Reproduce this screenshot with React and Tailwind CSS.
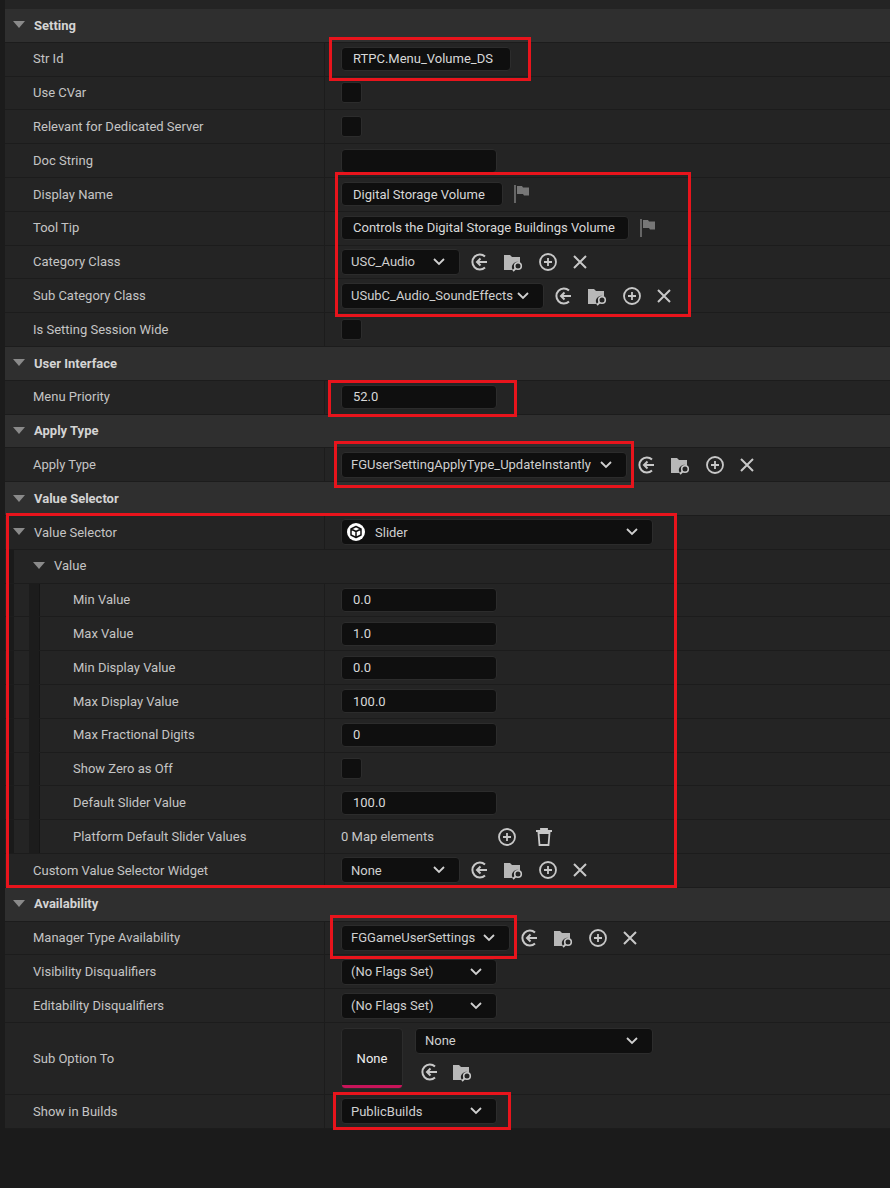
import React from "react";

const H = "h-[33.8px]";
const Tri = () => (
  <svg width="12" height="8" viewBox="0 0 12 8" className="shrink-0"><path d="M0 0h12L6 7z" fill="#8a8a8a" /></svg>
);
const Chev = () => (
  <svg width="12" height="8" viewBox="0 0 12 8" className="shrink-0"><path d="M1 1l5 5 5-5" stroke="#d0d0d0" strokeWidth="1.8" fill="none" /></svg>
);
const UseIcon = () => (
  <svg width="20" height="20" viewBox="0 0 20 20"><path d="M15 4.5A7.5 7.5 0 1 0 15 15.5" stroke="#c8c8c8" strokeWidth="2" fill="none" /><path d="M17 10H7M10.5 6.5L7 10l3.5 3.5" stroke="#c8c8c8" strokeWidth="2" fill="none" /></svg>
);
const Browse = () => (
  <svg width="22" height="20" viewBox="0 0 22 20"><path d="M1 3h6l2 2h8v6a5 5 0 0 0-7 7H1z" fill="#b8b8b8" /><circle cx="15" cy="14" r="3.3" stroke="#c8c8c8" strokeWidth="1.6" fill="none" /><path d="M12.5 16.5L10 19" stroke="#c8c8c8" strokeWidth="1.8" /></svg>
);
const Plus = () => (
  <svg width="20" height="20" viewBox="0 0 20 20"><circle cx="10" cy="10" r="8" stroke="#c8c8c8" strokeWidth="1.8" fill="none" /><path d="M10 6v8M6 10h8" stroke="#c8c8c8" strokeWidth="1.8" /></svg>
);
const X = () => (
  <svg width="18" height="18" viewBox="0 0 18 18"><path d="M3 3l12 12M15 3L3 15" stroke="#c8c8c8" strokeWidth="2" /></svg>
);
const Trash = () => (
  <svg width="18" height="20" viewBox="0 0 18 20"><path d="M1 4h16M6 4V2h6v2M3.5 6h11l-1 12h-9z" stroke="#c8c8c8" strokeWidth="1.8" fill="none" /></svg>
);
const Flag = () => (
  <svg width="18" height="20" viewBox="0 0 18 20"><path d="M2 1v18" stroke="#777" strokeWidth="1.6" /><path d="M4 2h5l1 1.5h6v8h-5l-1-1.5H4z" fill="#777" /></svg>
);
const Tools = () => (
  <div className="flex items-center gap-[13px] shrink-0"><UseIcon /><Browse /><Plus /><X /></div>
);

const Box = ({ w, children, cls = "" }) => (
  <div className={`h-[24px] rounded-[4px] bg-[#0f0f0f] border border-[#2c2c2c] flex items-center px-[11px] text-[#d8d8d8] shrink-0 ${cls}`} style={{ width: w }}>{children}</div>
);
const Combo = ({ w, text }) => (
  <div className="h-[26px] rounded-[4px] bg-[#0f0f0f] border border-[#2c2c2c] flex items-center justify-between pl-[9px] pr-[14px] text-[#d0d0d0] shrink-0" style={{ width: w }}>
    <span>{text}</span><Chev />
  </div>
);
const Check = () => <div className="w-[21px] h-[21px] rounded-[3px] bg-[#0f0f0f] border border-[#2c2c2c]" />;

const Header = ({ t }) => (
  <div className={`${H} bg-[#2f2f2f] border-b border-[#1c1c1c] flex items-center pl-[8px] gap-[9px] font-bold text-[#d4d4d4]`}>
    <Tri /><span>{t}</span>
  </div>
);

const Row = ({ label, children, depth = 0, tri, full, h = H }) => {
  const pad = depth === 0 ? (tri ? "pl-[8px]" : "pl-[28px]") : depth === 1 ? "pl-[28px]" : "pl-[68px]";
  return (
    <div className={`${h} flex border-b border-[#1c1c1c] bg-[#242424] relative`}>
      {depth >= 1 && <div className="absolute left-[3px] top-0 bottom-0 w-[6px] bg-[#1a1a1a]" />}
      {depth >= 2 && <div className="absolute left-[24px] top-0 bottom-0 w-[10px] bg-[#1c1c1c]" />}
      {depth >= 2 && <div className="absolute left-[34px] top-0 bottom-0 w-[1px] bg-[#151515]" />}
      <div className={`w-[320px] shrink-0 flex items-center gap-[9px] ${full ? "flex-1" : "border-r border-[#1c1c1c]"} ${pad}`}>
        {tri && <Tri />}<span>{label}</span>
      </div>
      {!full && <div className="flex-1 flex items-center pl-[16px] gap-[10px]">{children}</div>}
    </div>
  );
};

const Red = ({ l, t, w, h }) => (
  <div className="absolute border-[3px] border-[#e8141c] pointer-events-none" style={{ left: l, top: t, width: w, height: h }} />
);

export default function App() {
  return (
    <div className="w-[890px] h-[1188px] bg-[#1b1b1b] relative overflow-hidden text-[13px] text-[#c4c4c4]" style={{ fontFamily: "Roboto, 'Noto Sans', sans-serif" }}>
      <div className="h-[9px] bg-[#242424] ml-[5px]" />
      <div className="ml-[5px]">
        <Header t="Setting" />
        <Row label="Str Id"><Box w={170}>RTPC.Menu_Volume_DS</Box></Row>
        <Row label="Use CVar"><Check /></Row>
        <Row label="Relevant for Dedicated Server"><Check /></Row>
        <Row label="Doc String"><Box w={156} /></Row>
        <Row label="Display Name"><Box w={162}>Digital Storage Volume</Box><Flag /></Row>
        <Row label="Tool Tip"><Box w={288}>Controls the Digital Storage Buildings Volume</Box><Flag /></Row>
        <Row label="Category Class"><Combo w={119} text="USC_Audio" /><Tools /></Row>
        <Row label="Sub Category Class"><Combo w={203} text="USubC_Audio_SoundEffects" /><Tools /></Row>
        <Row label="Is Setting Session Wide"><Check /></Row>
        <Header t="User Interface" />
        <Row label="Menu Priority"><Box w={156}>52.0</Box></Row>
        <Header t="Apply Type" />
        <Row label="Apply Type"><Combo w={286} text="FGUserSettingApplyType_UpdateInstantly" /><Tools /></Row>
        <Header t="Value Selector" />
        <Row label="Value Selector" tri>
          <div className="h-[26px] w-[312px] rounded-[4px] bg-[#0f0f0f] border border-[#2c2c2c] flex items-center justify-between pl-[4px] pr-[14px] text-[#d0d0d0]">
            <span className="flex items-center gap-[9px]">
              <svg width="20" height="20" viewBox="0 0 20 20"><circle cx="10" cy="10" r="9" fill="#fff" /><path d="M10 4.5l5 2.5v6l-5 2.5-5-2.5V7z M5 7l5 2.5 5-2.5M10 9.5v6" stroke="#111" strokeWidth="1.5" fill="none" strokeLinejoin="round" /></svg>
              Slider
            </span><Chev />
          </div>
        </Row>
        <Row label="Value" depth={1} tri full />
        <Row label="Min Value" depth={2}><Box w={156}>0.0</Box></Row>
        <Row label="Max Value" depth={2}><Box w={156}>1.0</Box></Row>
        <Row label="Min Display Value" depth={2}><Box w={156}>0.0</Box></Row>
        <Row label="Max Display Value" depth={2}><Box w={156}>100.0</Box></Row>
        <Row label="Max Fractional Digits" depth={2}><Box w={156}>0</Box></Row>
        <Row label="Show Zero as Off" depth={2}><Check /></Row>
        <Row label="Default Slider Value" depth={2}><Box w={156}>100.0</Box></Row>
        <Row label="Platform Default Slider Values" depth={2}>
          <span className="text-[#c8c8c8] w-[146px]">0 Map elements</span><Plus /><span className="ml-[8px]"><Trash /></span>
        </Row>
        <Row label="Custom Value Selector Widget"><Combo w={119} text="None" /><Tools /></Row>
        <Header t="Availability" />
        <Row label="Manager Type Availability"><Combo w={169} text="FGGameUserSettings" /><Tools /></Row>
        <Row label="Visibility Disqualifiers"><Combo w={156} text="(No Flags Set)" /></Row>
        <Row label="Editability Disqualifiers"><Combo w={156} text="(No Flags Set)" /></Row>
        <Row label="Sub Option To" h="h-[72px]">
          <div className="flex gap-[12px] items-start">
            <div className="w-[62px] h-[61px] rounded-[4px] bg-[#1a1a1a] border border-[#2c2c2c] flex items-center justify-center text-[#eee] relative overflow-hidden">
              None<div className="absolute bottom-0 left-0 right-0 h-[3px] bg-[#c8145a]" />
            </div>
            <div className="flex flex-col gap-[8px]">
              <Combo w={238} text="None" />
              <div className="flex items-center gap-[12px] pl-[5px]"><UseIcon /><Browse /></div>
            </div>
          </div>
        </Row>
        <Row label="Show in Builds"><Combo w={156} text="PublicBuilds" /></Row>
      </div>
      <Red l={329} t={37} w={202} h={44} />
      <Red l={335} t={172} w={356} h={145} />
      <Red l={328} t={380} w={189} h={37} />
      <Red l={334} t={441} w={300} h={47} />
      <Red l={6} t={513} w={671} h={375} />
      <Red l={330} t={915} w={187} h={44} />
      <Red l={333} t={1092} w={178} h={38} />
    </div>
  );
}
